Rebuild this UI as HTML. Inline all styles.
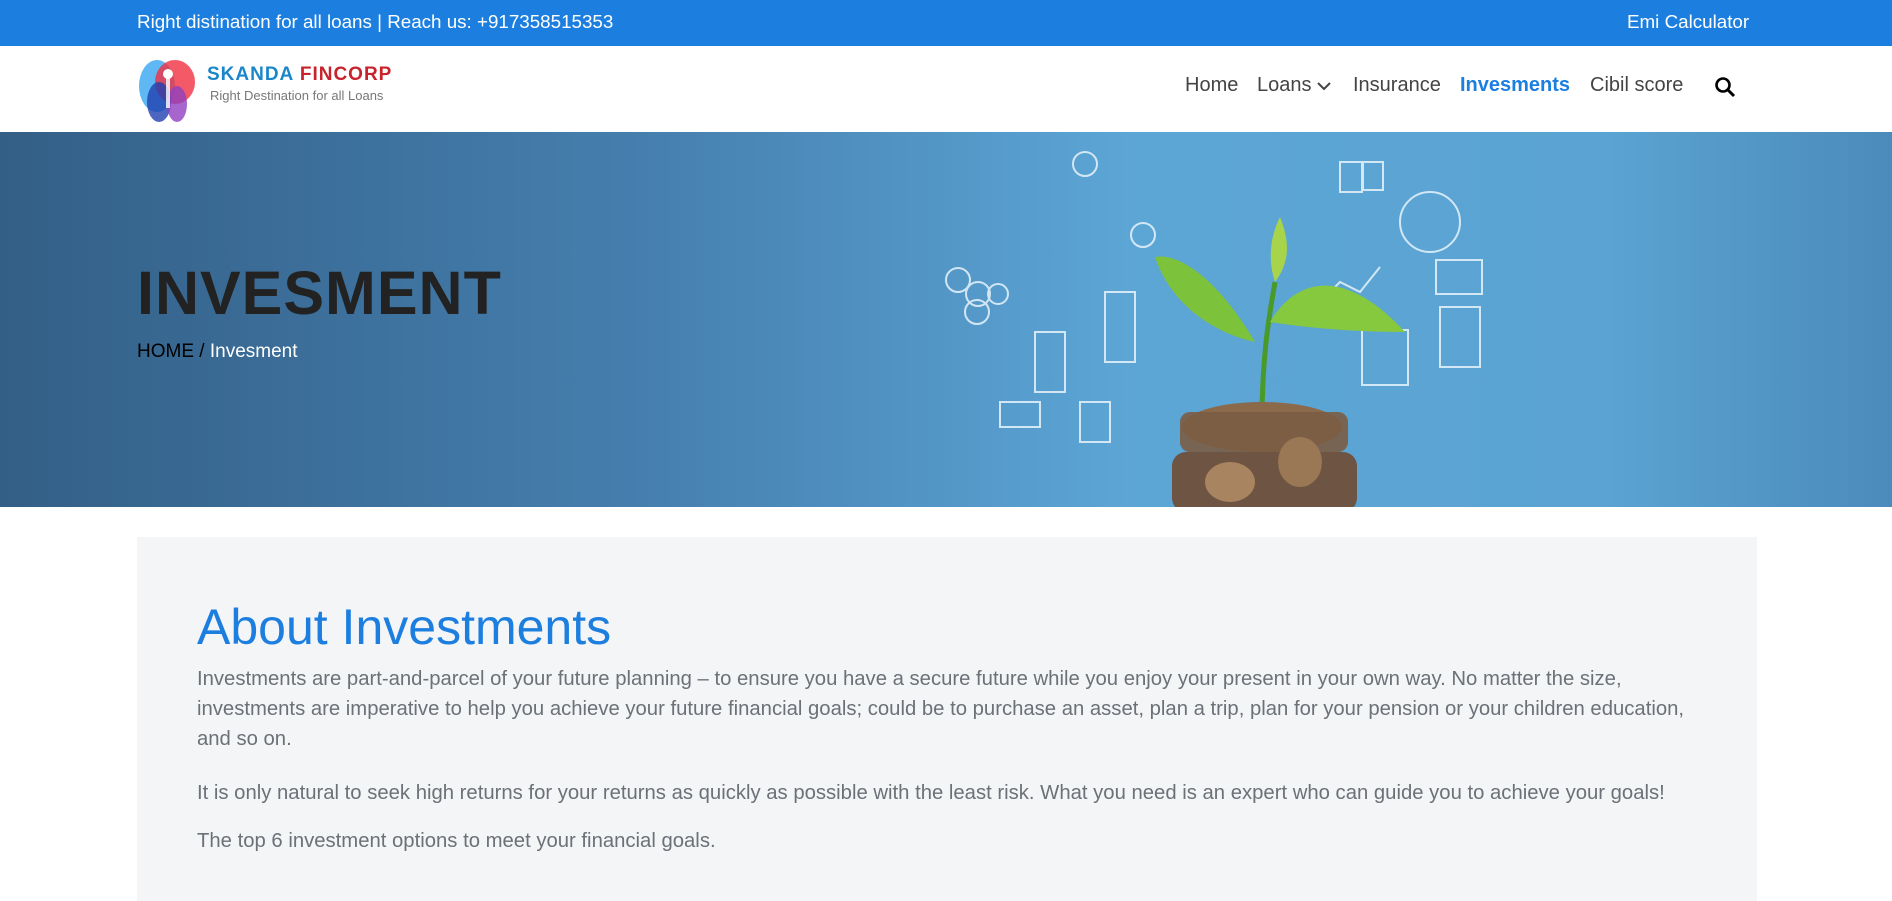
<!DOCTYPE html>
<html><head><meta charset="utf-8"><style>
*{margin:0;padding:0;box-sizing:border-box}
body{width:1892px;height:901px;overflow:hidden;font-family:"Liberation Sans",Arial,sans-serif;background:#fff;position:relative}
.top{position:absolute;left:0;top:0;width:1892px;height:46px;background:#1c7fe0;color:#fff;font-size:18.8px}
.top span{position:absolute;top:11px}
.nav{position:absolute;top:46px;left:0;width:1892px;height:86px;background:#fff}
.nav a{position:absolute;top:28px;font-size:20px;color:#444;text-decoration:none}
.hero{position:absolute;top:132px;left:0;width:1892px;height:375px;background:linear-gradient(90deg,#335f86 0%,#4680b0 35%,#5ca6d6 60%,#5aa3d2 85%,#4b8bbb 100%);overflow:hidden}
.hero h1{position:absolute;left:137px;top:126px;font-size:61px;font-weight:bold;color:#222;letter-spacing:1px}
.bc{position:absolute;left:137px;top:209px;font-size:19px;color:#000}
.bc b{font-weight:normal;color:#fff}
.box{position:absolute;left:137px;top:537px;width:1620px;height:364px;background:#f4f5f7}
.box h2{position:absolute;left:60px;top:61px;font-size:50px;font-weight:normal;color:#1c7fe0}
.box p{position:absolute;left:60px;width:1495px;font-size:20.3px;line-height:30px;color:#6b7177}
</style></head><body>
<div class="top"><span style="left:137px">Right distination for all loans | Reach us: +917358515353</span><span style="left:1627px">Emi Calculator</span></div>
<div class="nav">
<svg style="position:absolute;left:137px;top:10px" width="60" height="68" viewBox="0 0 60 68">
<ellipse cx="20" cy="30" rx="18" ry="26" fill="#2aa0f0" opacity=".75"/>
<ellipse cx="38" cy="26" rx="20" ry="22" fill="#f03040" opacity=".8"/>
<ellipse cx="22" cy="46" rx="12" ry="20" fill="#2040b0" opacity=".8"/>
<ellipse cx="40" cy="48" rx="10" ry="18" fill="#9040c0" opacity=".8"/>
<circle cx="31" cy="18" r="5" fill="#fff"/><rect x="29" y="22" width="4" height="30" fill="#fff" opacity=".8"/>
</svg>
<div style="position:absolute;left:207px;top:18px;font-size:19px;font-weight:bold;letter-spacing:1px"><span style="color:#1b86c9">SKANDA</span> <span style="color:#c8232c">FINCORP</span></div>
<div style="position:absolute;left:210px;top:42px;font-size:13px;color:#777">Right Destination for all Loans</div>
<a style="left:1185px">Home</a>
<a style="left:1257px">Loans <svg width="14" height="10" viewBox="0 0 14 10"><path d="M1 2l6 6 6-6" stroke="#444" stroke-width="2" fill="none"/></svg></a>
<a style="left:1353px">Insurance</a>
<a style="left:1460px;color:#1c7fe0;font-weight:bold">Invesments</a>
<a style="left:1590px">Cibil score</a>
<svg style="position:absolute;left:1714px;top:30px" width="22" height="22" viewBox="0 0 22 22"><circle cx="9" cy="9" r="6.5" stroke="#000" stroke-width="2.6" fill="none"/><path d="M14 14l6 6" stroke="#000" stroke-width="3"/></svg>
</div>
<div class="hero">
<svg style="position:absolute;left:0;top:0" width="1892" height="375" viewBox="0 0 1892 375">
<g stroke="#e8f3fb" stroke-width="2" fill="none" opacity=".85">
<circle cx="1085" cy="32" r="12"/><circle cx="1143" cy="103" r="12"/><circle cx="958" cy="148" r="12"/><circle cx="978" cy="162" r="12"/><circle cx="998" cy="162" r="10"/><circle cx="977" cy="180" r="12"/>
<circle cx="1430" cy="90" r="30"/><rect x="1436" y="128" width="46" height="34"/><rect x="1340" y="30" width="22" height="30"/><rect x="1363" y="30" width="20" height="28"/>
<rect x="1105" y="160" width="30" height="70"/><rect x="1000" y="270" width="40" height="25"/><rect x="1080" y="270" width="30" height="40"/><rect x="1362" y="198" width="46" height="55"/><rect x="1440" y="175" width="40" height="60"/><path d="M1320 170l20-20 20 10 20-25"/><rect x="1035" y="200" width="30" height="60"/>
</g>
<path d="M1262 290 C1262 220 1270 180 1275 150" stroke="#4a9a2a" stroke-width="5" fill="none"/>
<path d="M1255 210 C1220 150 1180 120 1155 125 C1170 170 1210 200 1255 210Z" fill="#7cc23a"/>
<path d="M1270 190 C1300 140 1350 140 1405 200 C1350 200 1300 195 1270 190Z" fill="#86c83e"/>
<path d="M1275 150 C1265 120 1275 95 1280 85 C1290 110 1290 130 1275 150Z" fill="#a7d44a"/>
<ellipse cx="1262" cy="295" rx="80" ry="25" fill="#8a6a4a"/>
<rect x="1180" y="280" width="168" height="40" rx="10" fill="#7a5d44" opacity=".9"/>
<rect x="1172" y="320" width="185" height="60" rx="14" fill="#6e5442"/>
<ellipse cx="1230" cy="350" rx="25" ry="20" fill="#a88460"/><ellipse cx="1300" cy="330" rx="22" ry="25" fill="#9a7755"/>
</svg>
<h1>INVESMENT</h1>
<div class="bc">HOME / <b>Invesment</b></div>
</div>
<div class="box">
<h2>About Investments</h2>
<p style="top:127px">Investments are part-and-parcel of your future planning – to ensure you have a secure future while you enjoy your present in your own way. No matter the size, investments are imperative to help you achieve your future financial goals; could be to purchase an asset, plan a trip, plan for your pension or your children education, and so on.</p>
<p style="top:241px">It is only natural to seek high returns for your returns as quickly as possible with the least risk. What you need is an expert who can guide you to achieve your goals!</p>
<p style="top:289px">The top 6 investment options to meet your financial goals.</p>
</div>
</body></html>
